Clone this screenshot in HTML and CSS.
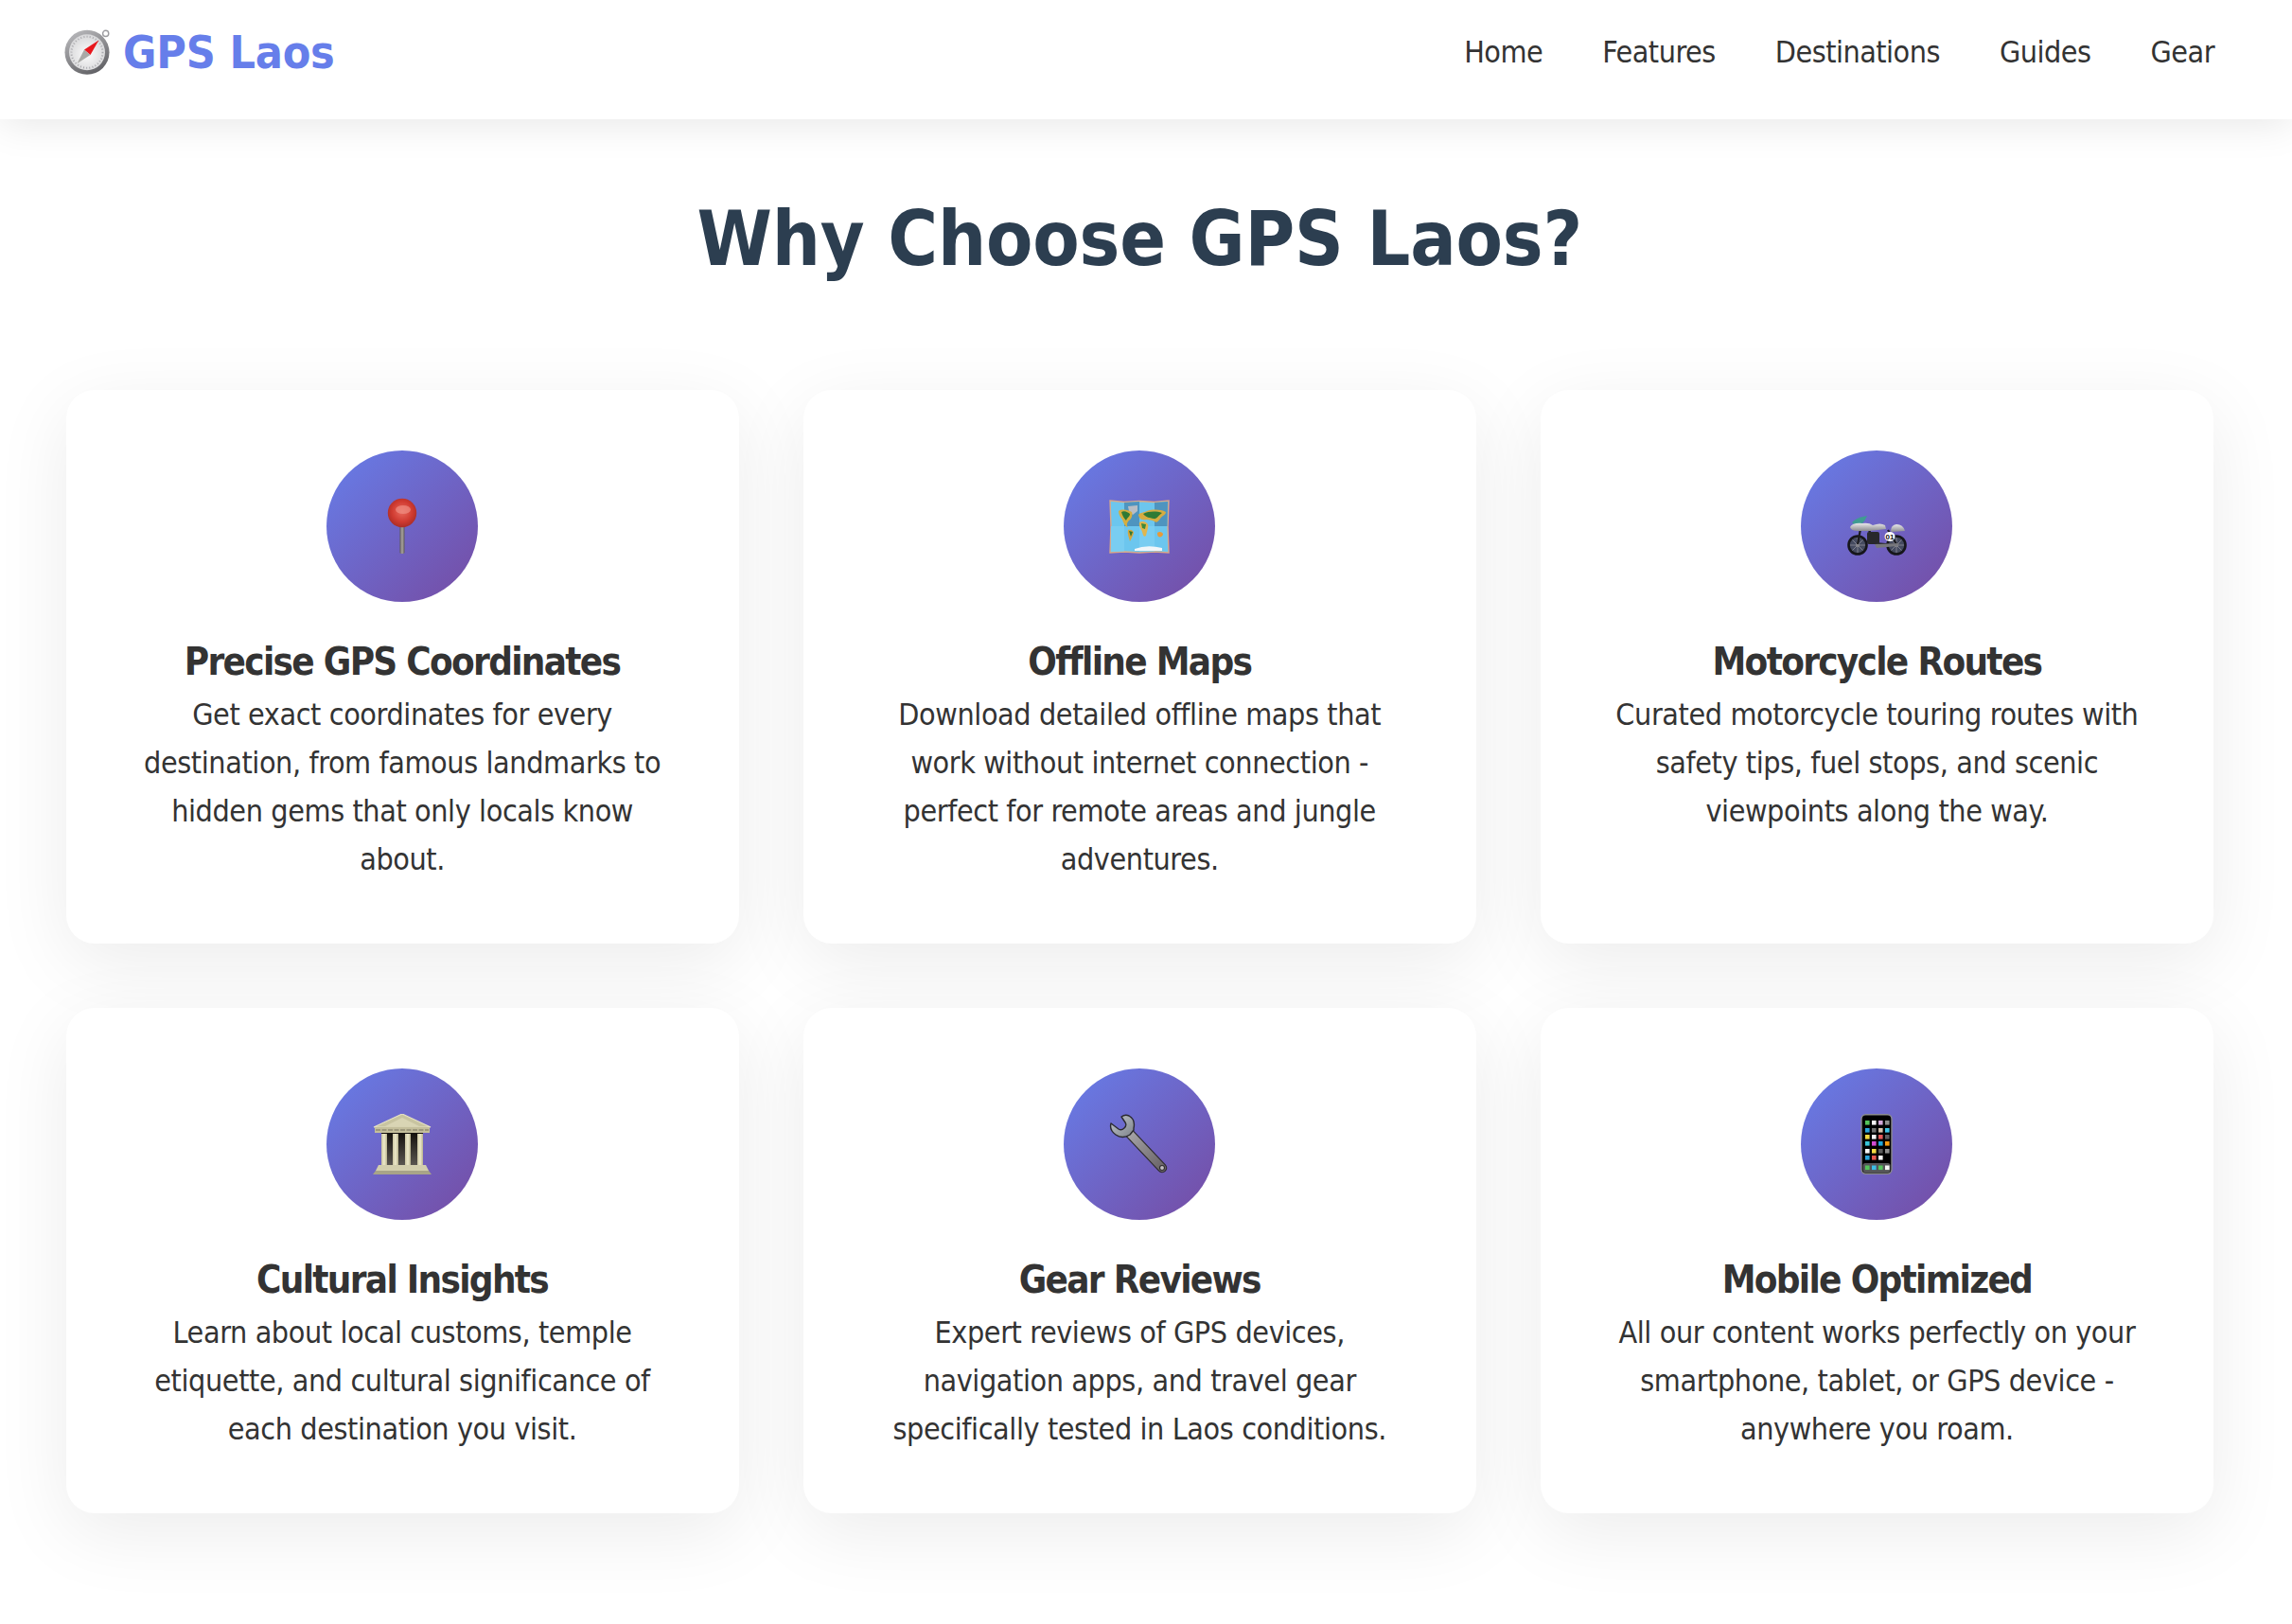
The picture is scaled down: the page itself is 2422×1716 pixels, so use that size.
FILE: index.html
```html
<!DOCTYPE html>
<html lang="en">
<head>
<meta charset="utf-8">
<title>GPS Laos</title>
<link rel="stylesheet" href="styles.css">
</head>
<body>
<header class="topbar">
  <a class="logo" href="#">
    <svg class="logo-icon" viewBox="0 0 48 48" width="48" height="48" aria-hidden="true">
      <defs>
        <linearGradient id="cb" x1="0.2" y1="0" x2="0.7" y2="1"><stop offset="0" stop-color="#b9b9bc"/><stop offset="1" stop-color="#5f5f63"/></linearGradient>
        <radialGradient id="cf" cx="0.5" cy="0.55" r="0.6"><stop offset="0" stop-color="#fbfbfb"/><stop offset="1" stop-color="#d4d4d6"/></radialGradient>
      </defs>
      <circle cx="43.7" cy="4.4" r="3.1" fill="#fff" stroke="#9c9ca0" stroke-width="1.4"/>
      <circle cx="24" cy="24.3" r="23.5" fill="url(#cb)"/>
      <circle cx="24" cy="24.3" r="19" fill="url(#cf)"/>
      <circle cx="24" cy="24.3" r="16.5" fill="none" stroke="#a8a8ac" stroke-width="2" stroke-dasharray="1 2.2"/>
      <polygon points="36.4,11.6 27.5,27 21,21.5" fill="#e8161c"/>
      <polygon points="13.6,36 21,21.5 27.5,27" fill="#a9a9a6"/>
    </svg>
    <span class="logo-text">GPS Laos</span>
  </a>
  <nav class="menu">
    <a href="#">Home</a>
    <a href="#">Features</a>
    <a href="#">Destinations</a>
    <a href="#">Guides</a>
    <a href="#">Gear</a>
  </nav>
</header>

<main class="features">
  <h2 class="section-title">Why Choose GPS Laos?</h2>
  <div class="grid">

    <article class="card">
      <div class="badge">
        <svg viewBox="0 0 64 64" width="64" height="64" aria-hidden="true">
          <defs>
            <radialGradient id="pb" cx="0.5" cy="0.45" r="0.6"><stop offset="0" stop-color="#ea6a5e"/><stop offset="0.6" stop-color="#cf3a30"/><stop offset="1" stop-color="#a02a26"/></radialGradient>
            <linearGradient id="pn" x1="0" x2="1" y1="0" y2="0"><stop offset="0" stop-color="#5e5a58"/><stop offset="0.5" stop-color="#aaa49f"/><stop offset="1" stop-color="#5e5a58"/></linearGradient>
          </defs>
          <rect x="29.500" y="30" width="5" height="31" rx="1.500" fill="url(#pn)"/>
          <circle cx="32" cy="18" r="15.200" fill="url(#pb)"/>
          <ellipse cx="33" cy="14.500" rx="8" ry="4.500" fill="#f08f83" opacity="0.7"/>
        </svg>
      </div>
      <h3>Precise GPS Coordinates</h3>
      <p>Get exact coordinates for every destination, from famous landmarks to hidden gems that only locals know about.</p>
    </article>

    <article class="card">
      <div class="badge">
        <svg viewBox="0 0 64 64" width="64" height="64" aria-hidden="true">
          <polygon points="1,5 16,6.500 32,5.500 48,6.500 63,5 62,32 63,60 48,59 32,60 16,59 1,60 2,32" fill="#6cc6ee" stroke="#d8a98a" stroke-width="1.400"/>
          <polygon points="16,7 32,6 32,32 16,32" fill="#4e94bf"/>
          <polygon points="48,7 62,6 61.500,32 48,32" fill="#4e94bf"/>
          <polygon points="2,32 16,32 16,58.500 2,59" fill="#79cdf1"/>
          <polygon points="32,32 48,32 48,58.500 32,59" fill="#79cdf1"/>
          <path d="M20 11 L30 10 L30 16 L25 20 L21 16Z" fill="#b9bdc4"/>
          <path d="M10 16 C14 13 20 15 24 17 C25 20 24 24 21 26 C19 28 18 31 20 33 C17 33 15 28 14 25 C12 22 10 20 10 16Z" fill="#d5ae3f"/>
          <path d="M13 17 C16 15 20 17 22 19 C22 22 19 23 18 26 C16 24 14 21 13 17Z" fill="#2e7a34"/>
          <path d="M20 36 C23 35 26 37 26 39 C25 43 23 46 22 48 C21 44 19 40 20 36Z" fill="#d8a53a"/>
          <path d="M21 37 L25 38 L23 43Z" fill="#2e7a34"/>
          <path d="M31 20 C33 17 37 18 40 16 C46 14 54 14 60 17 C60 20 56 21 54 24 C52 27 50 29 48 27 C45 25 42 26 40 25 C36 26 32 25 31 20Z" fill="#d6ac42"/>
          <path d="M36 19 C42 16 50 16 56 18 C52 21 50 25 47 24 C43 23 39 23 36 19Z" fill="#2f7b35"/>
          <path d="M32 28 C35 26 39 27 41 30 C42 33 40 37 39 42 C37 44 36 42 35 38 C34 35 31 32 32 28Z" fill="#e0b64d"/>
          <path d="M34 29 L39 30 L38 35 L35 34Z" fill="#3d8a3c"/>
          <path d="M51 39 C53 37 56 38 57 40 C57 43 54 44 52 43 C51 42 51 40 51 39Z" fill="#e79a39"/>
          <path d="M27 56 Q40 51 56 55 L56 58 L27 58Z" fill="#f1f6f9"/>
        </svg>
      </div>
      <h3>Offline Maps</h3>
      <p>Download detailed offline maps that work without internet connection - perfect for remote areas and jungle adventures.</p>
    </article>

    <article class="card">
      <div class="badge">
        <svg viewBox="0 0 64 64" width="64" height="64" aria-hidden="true">
          <defs>
            <linearGradient id="ms" x1="0" x2="0" y1="0" y2="1"><stop offset="0" stop-color="#e9e9eb"/><stop offset="1" stop-color="#8b8b90"/></linearGradient>
          </defs>
          <g stroke="#9a9aa2" stroke-width="0.700">
            <circle cx="12" cy="52" r="9.500" fill="#454b60" stroke="#16161b" stroke-width="2.600"/>
            <circle cx="53" cy="52" r="9.500" fill="#454b60" stroke="#16161b" stroke-width="2.600"/>
            <path d="M4 52 H20 M12 44 V60 M6.500 46.500 L17.500 57.500 M17.500 46.500 L6.500 57.500 M45 52 H61 M53 44 V60 M47.500 46.500 L58.500 57.500 M58.500 46.500 L47.500 57.500"/>
          </g>
          <circle cx="12" cy="52" r="2" fill="#85858c"/>
          <circle cx="53" cy="52" r="2" fill="#85858c"/>
          <path d="M15 35 L12 51 M24 36 L30 50 L53 52 M44 36 L53 51" stroke="#1c1c20" stroke-width="2.200" fill="none"/>
          <rect x="22" y="38" width="13" height="13" rx="2" fill="#28282c"/>
          <path d="M30 51 L56 50 L54 53 L32 55Z" fill="#77777c"/>
          <path d="M6 28 Q10 23 22 21 Q20 26 17 29 L8 30Z" fill="#3f9b92"/>
          <path d="M4 33 Q7 28 17 29 Q24 28 28 31 Q36 28 41 31 L42 35 L25 37 L12 37 Q5 37 4 33Z" fill="url(#ms)"/>
          <path d="M47 37 Q47 31 53 30 Q60 30 62 37 L48 38Z" fill="url(#ms)"/>
          <ellipse cx="46" cy="43" rx="5.500" ry="5" fill="#fff"/>
          <text class="moto-num" x="46" y="46">01</text>
        </svg>
      </div>
      <h3>Motorcycle Routes</h3>
      <p>Curated motorcycle touring routes with safety tips, fuel stops, and scenic viewpoints along the way.</p>
    </article>

    <article class="card">
      <div class="badge">
        <svg viewBox="0 0 64 64" width="64" height="64" aria-hidden="true">
          <defs>
            <linearGradient id="tc" x1="0" x2="1" y1="0" y2="0"><stop offset="0" stop-color="#c9c4a0"/><stop offset="0.5" stop-color="#eeeacb"/><stop offset="1" stop-color="#b8b38e"/></linearGradient>
            <linearGradient id="td" x1="0" x2="0" y1="0" y2="1"><stop offset="0" stop-color="#14110d"/><stop offset="1" stop-color="#5a5650"/></linearGradient>
          </defs>
          <rect x="10" y="20" width="44" height="34" fill="url(#td)"/>
          <polygon points="32,0 2,14 62,14" fill="#c8c4a0" stroke="#e6e2c4" stroke-width="1.200"/>
          <polygon points="32,4 14,13 50,13" fill="#d9d5b4"/>
          <rect x="3" y="14" width="58" height="6" fill="#c4bf9b"/>
          <line x1="4" y1="17" x2="60" y2="17" stroke="#77735c" stroke-width="1.200" stroke-dasharray="5 1.500"/>
          <rect x="10" y="21" width="6" height="33" fill="url(#tc)"/>
          <rect x="22" y="21" width="6" height="33" fill="url(#tc)"/>
          <rect x="35" y="21" width="6" height="33" fill="url(#tc)"/>
          <rect x="48" y="21" width="6" height="33" fill="url(#tc)"/>
          <polygon points="7,54 57,54 60,60 4,60" fill="#d3cfae"/>
          <polygon points="4,60 60,60 63,64 1,64" fill="#a8a488"/>
        </svg>
      </div>
      <h3>Cultural Insights</h3>
      <p>Learn about local customs, temple etiquette, and cultural significance of each destination you visit.</p>
    </article>

    <article class="card">
      <div class="badge">
        <svg viewBox="0 0 64 64" width="64" height="64" aria-hidden="true">
          <defs>
            <linearGradient id="wh" x1="0" x2="1" y1="0" y2="1"><stop offset="0" stop-color="#c2c8ce"/><stop offset="1" stop-color="#7d8289"/></linearGradient>
            <linearGradient id="ws" x1="0" x2="1" y1="0" y2="1"><stop offset="0" stop-color="#a5a3a6"/><stop offset="1" stop-color="#6a6468"/></linearGradient>
          </defs>
          <path d="M22 21 L56 57" stroke="#2f2c30" stroke-width="10.500" stroke-linecap="round"/>
          <path d="M22 21 L56 57" stroke="url(#ws)" stroke-width="8" stroke-linecap="round"/>
          <path d="M2 10 L10 16 Q13 18 16 15 Q19 12 17 9 L13 3 Q17 0 21 2 Q28 6 26 15 L26 17 L22 22 Q14 27 7 22 Q0 17 2 10Z" fill="url(#wh)" stroke="#2b2a30" stroke-width="1.400" stroke-linejoin="round"/>
          <circle cx="56" cy="57" r="2.500" fill="#c3bec2" stroke="#2f2c30" stroke-width="1.100"/>
        </svg>
      </div>
      <h3>Gear Reviews</h3>
      <p>Expert reviews of GPS devices, navigation apps, and travel gear specifically tested in Laos conditions.</p>
    </article>

    <article class="card">
      <div class="badge">
        <svg viewBox="0 0 64 64" width="64" height="64" aria-hidden="true">
          <rect x="16" y="0.800" width="32" height="62.400" rx="4.500" fill="#000" stroke="#8b8b90" stroke-width="1.400"/>
          <g>
            <rect x="20" y="7" width="4.600" height="4.600" fill="#54c45a"/><rect x="27" y="7" width="4.600" height="4.600" fill="#f4f4f4"/><rect x="34" y="7" width="4.600" height="4.600" fill="#d3a7d8"/><rect x="41" y="7" width="4.600" height="4.600" fill="#8d8d8d"/>
            <rect x="20" y="15" width="4.600" height="4.600" fill="#29a4dc"/><rect x="27" y="15" width="4.600" height="4.600" fill="#707070"/><rect x="34" y="15" width="4.600" height="4.600" fill="#d7c3ae"/><rect x="41" y="15" width="4.600" height="4.600" fill="#3dc4e6"/>
            <rect x="20" y="22" width="4.600" height="4.600" fill="#f2d93f"/><rect x="27" y="22" width="4.600" height="4.600" fill="#f6f6f6"/><rect x="34" y="22" width="4.600" height="4.600" fill="#e65a5a"/><rect x="41" y="22" width="4.600" height="4.600" fill="#5f5f62"/>
            <rect x="20" y="29" width="4.600" height="4.600" fill="#39c6d8"/><rect x="27" y="29" width="4.600" height="4.600" fill="#d24bd2"/><rect x="34" y="29" width="4.600" height="4.600" fill="#1fa8dc"/><rect x="41" y="29" width="4.600" height="4.600" fill="#f59c10"/>
            <rect x="20" y="37" width="4.600" height="4.600" fill="#f6f6f6"/><rect x="27" y="37" width="4.600" height="4.600" fill="#f5dc43"/><rect x="34" y="37" width="4.600" height="4.600" fill="#5d5d5d"/><rect x="41" y="37" width="4.600" height="4.600" fill="#8d8d8d"/>
            <rect x="20" y="44" width="4.600" height="4.600" fill="#29a4dc"/><rect x="27" y="44" width="4.600" height="4.600" fill="#e6584f"/><rect x="34" y="44" width="4.600" height="4.600" fill="#f6f6f6"/>
          </g>
          <rect x="17.500" y="52" width="29" height="10" rx="2.500" fill="#555558"/>
          <rect x="20" y="54.500" width="4.600" height="4.600" fill="#54c45a"/><rect x="27" y="54.500" width="4.600" height="4.600" fill="#3cbde6"/><rect x="34" y="54.500" width="4.600" height="4.600" fill="#54c45a"/><rect x="41" y="54.500" width="4.600" height="4.600" fill="#f6f6f6"/>
        </svg>
      </div>
      <h3>Mobile Optimized</h3>
      <p>All our content works perfectly on your smartphone, tablet, or GPS device - anywhere you roam.</p>
    </article>

  </div>
</main>
</body>
</html>
```

FILE: styles.css
```css
* { box-sizing: border-box; margin: 0; padding: 0; }

html, body { background: #fff; }

body {
  font-family: "DejaVu Sans", Verdana, sans-serif;
  font-stretch: condensed;
  color: #333;
  line-height: 1.6;
  min-height: 1716px;
  overflow: hidden;
}

.topbar {
  height: 126px;
  padding: 0 82px 15px 68px;
  display: flex;
  align-items: center;
  justify-content: space-between;
  background: #fff;
  box-shadow: 0 4px 40px rgba(0, 0, 0, 0.1);
  position: relative;
}

.logo {
  display: flex;
  align-items: center;
  gap: 14px;
  text-decoration: none;
}

.logo-icon { display: block; }

.logo-text {
  font-size: 48px;
  font-weight: 700;
  letter-spacing: -0.2px;
  color: #667eea;
}

.menu { display: flex; gap: 63px; }

.menu a {
  font-size: 32px;
  letter-spacing: -0.5px;
  color: #333;
  text-decoration: none;
}

.features { padding: 63px 83px 0 69.5px; }

.section-title {
  font-size: 80px;
  font-weight: 700;
  line-height: 128px;
  letter-spacing: -0.2px;
  color: #2c3e50;
  text-align: center;
  margin-bottom: 95px;
}

.grid {
  display: grid;
  grid-template-columns: repeat(3, 1fr);
  gap: 68px;
}

.card {
  padding: 64px 64px 63px;
  background: #fff;
  border-radius: 30px;
  box-shadow: 0 20px 80px rgba(0, 0, 0, 0.08);
  text-align: center;
}

.badge {
  width: 160px;
  height: 160px;
  margin: 0 auto 33px;
  border-radius: 50%;
  background: linear-gradient(135deg, #667eea 0%, #764ba2 100%);
  display: flex;
  align-items: center;
  justify-content: center;
}

.badge svg { display: block; }

.card h3 {
  font-size: 40px;
  font-weight: 700;
  line-height: 61px;
  letter-spacing: -1.7px;
  color: #333;
}

.card p {
  font-size: 32px;
  line-height: 51px;
  letter-spacing: -0.4px;
  color: #333;
}

.moto-num {
  font-family: "Liberation Sans", sans-serif;
  font-size: 8px;
  font-weight: 700;
  fill: #111;
  text-anchor: middle;
}
```
